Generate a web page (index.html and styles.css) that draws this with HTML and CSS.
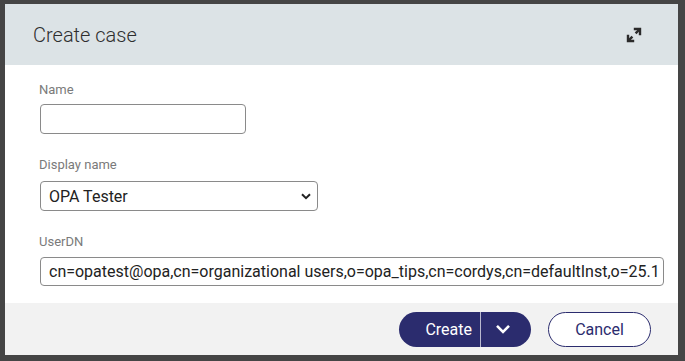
FILE: index.html
```html
<!DOCTYPE html>
<html>
<head>
<meta charset="utf-8">
<link rel="stylesheet" href="styles.css">
</head>
<body>
<div class="stage">
  <div class="dialog">
    <div class="header">
      <h1 class="title">Create case</h1>
      <button class="expand" aria-label="Expand">
        <svg width="16" height="16" viewBox="0 0 16 16" fill="none" stroke="#2b2b2b" stroke-width="2.4">
          <path d="M9 2h5v5" stroke-linecap="square"/>
          <path d="M13.6 2.4L9.6 6.4"/>
          <path d="M7 14H2V9" stroke-linecap="square"/>
          <path d="M2.4 13.6L6.4 9.6"/>
        </svg>
      </button>
    </div>
    <div class="body">
      <div class="field">
        <label class="label">Name</label>
        <input class="input input-name" type="text">
      </div>
      <div class="field field-display">
        <label class="label">Display name</label>
        <div class="select">
          <span>OPA Tester</span>
          <svg width="10" height="7" viewBox="0 0 10 7" fill="none" stroke="#222" stroke-width="2"><path d="M1 1.2l4 4 4-4"/></svg>
        </div>
      </div>
      <div class="field field-dn">
        <label class="label">UserDN</label>
        <div class="input input-dn"><span>cn=opatest@opa,cn=organizational users,o=opa_tips,cn=cordys,cn=defaultInst,o=25.1</span></div>
      </div>
    </div>
    <div class="footer">
      <div class="split">
        <span class="split-main">Create</span>
        <span class="split-div"></span>
        <span class="split-arrow">
          <svg width="16" height="10" viewBox="0 0 16 10" fill="none" stroke="#fff" stroke-width="2.6"><path d="M2 1.8l6 6 6-6"/></svg>
        </span>
      </div>
      <button class="cancel">Cancel</button>
    </div>
  </div>
</div>
</body>
</html>
```
FILE: styles.css
```css
html, body {
  margin: 0;
  padding: 0;
  background: #454545;
  height: 361px;
  overflow: hidden;
}
.stage {
  padding: 4px 0 0 5px;
}
.dialog {
  width: 673px;
  height: 351px;
  background: #fff;
  display: flex;
  flex-direction: column;
  font-family: Roboto, "Liberation Sans", sans-serif;
}
.header {
  flex: 0 0 61px;
  background: #dce3e6;
  display: flex;
  align-items: center;
  justify-content: space-between;
  padding: 0 36px 0 28px;
  box-sizing: border-box;
}
.title {
  margin: 0;
  font-weight: 300;
  font-size: 20px;
  color: #2e2e2e;
  padding-top: 1px;
}
.expand {
  border: 0;
  background: none;
  padding: 0;
  width: 16px;
  height: 16px;
  display: block;
  margin-top: 1px;
}
.expand svg { display: block; }
.body {
  flex: 1 1 auto;
  min-height: 0;
  overflow: hidden;
  padding: 17px 0 0 35px;
  box-sizing: border-box;
}
.field {
  display: flex;
  flex-direction: column;
  align-items: flex-start;
  margin-bottom: 23px;
}
.field-display .label { margin-bottom: 8px; }
.field-dn { margin-top: 3px; }
.field-dn .label { margin-bottom: 7px; }
.label {
  font-size: 13px;
  line-height: 16px;
  color: #7a7a7a;
  margin: 0 0 6px -1px;
}
.input {
  box-sizing: border-box;
  border: 1px solid #8a8a8a;
  border-radius: 4px;
  background: #fff;
  font-family: Roboto, "Liberation Sans", sans-serif;
  font-size: 16px;
  color: #222;
  margin: 0;
  outline: none;
}
.input-name {
  width: 206px;
  height: 30px;
}
.select {
  box-sizing: border-box;
  width: 278px;
  height: 30px;
  border: 1px solid #8a8a8a;
  border-radius: 4px;
  display: flex;
  align-items: center;
  justify-content: space-between;
  padding: 0 6px 0 8px;
  font-size: 16px;
  color: #222;
}
.select svg { display: block; }
.input-dn {
  width: 624px;
  height: 29px;
  display: flex;
  align-items: center;
  padding: 0 8px;
  overflow: hidden;
  white-space: nowrap;
}
.footer {
  flex: 0 0 52px;
  background: #f2f2f2;
  display: flex;
  align-items: center;
  justify-content: flex-end;
  gap: 17px;
  padding: 0 27px 0 0;
  box-sizing: border-box;
}
.split {
  width: 132px;
  height: 35px;
  border-radius: 18px;
  background: #2b2c6e;
  display: flex;
  align-items: center;
  color: #fff;
  font-size: 16px;
  box-sizing: border-box;
}
.split-main {
  width: 81px;
  text-align: right;
  padding-right: 8px;
  box-sizing: border-box;
}
.split-div {
  width: 1px;
  height: 35px;
  background: #b9b9cf;
}
.split-arrow {
  flex: 1;
  display: flex;
  justify-content: center;
  padding-right: 7px;
}
.split-arrow svg { display: block; }
.cancel {
  width: 103px;
  height: 35px;
  border-radius: 18px;
  border: 1px solid #2b2c6e;
  background: #fff;
  color: #2b2c6e;
  font-family: Roboto, "Liberation Sans", sans-serif;
  font-size: 16px;
  padding: 0;
}
```
